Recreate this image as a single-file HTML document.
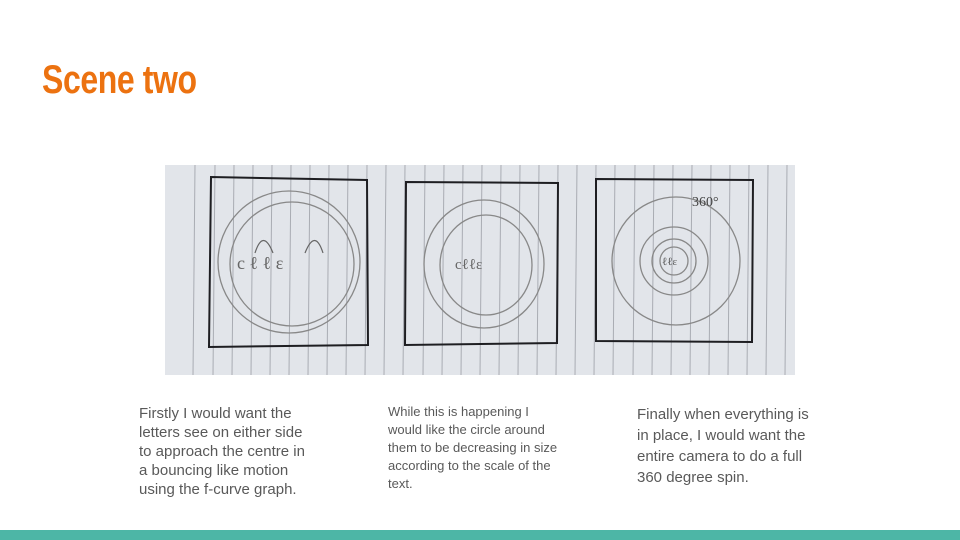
<!DOCTYPE html>
<html><head><style>
body{margin:0;width:960px;height:540px;background:#fff;position:relative;overflow:hidden;font-family:"Liberation Sans",sans-serif}
h1{position:absolute;left:42px;top:58px;margin:0;font-family:"Liberation Sans",sans-serif;font-weight:bold;font-size:40px;color:#ec7210;letter-spacing:-0.5px;transform:scaleX(0.8);transform-origin:0 0;white-space:nowrap}
.t{position:absolute;color:#595959;white-space:nowrap}
.bar{position:absolute;left:0;top:530px;width:960px;height:10px;background:#4db6a6}
</style></head><body>
<h1>Scene two</h1>
<svg style="position:absolute;left:165px;top:165px" width="630" height="210" viewBox="0 0 630 210">
<rect width="630" height="210" fill="#e2e5ea"/>
<g stroke="#a9acb3" stroke-width="1">
<line x1="30" y1="0" x2="28" y2="210"/><line x1="50" y1="0" x2="48" y2="210"/><line x1="69" y1="0" x2="67" y2="210"/><line x1="88" y1="0" x2="86" y2="210"/><line x1="107" y1="0" x2="105" y2="210"/><line x1="126" y1="0" x2="124" y2="210"/><line x1="145" y1="0" x2="143" y2="210"/><line x1="164" y1="0" x2="162" y2="210"/><line x1="183" y1="0" x2="181" y2="210"/><line x1="202" y1="0" x2="200" y2="210"/><line x1="221" y1="0" x2="219" y2="210"/><line x1="240" y1="0" x2="238" y2="210"/><line x1="260" y1="0" x2="258" y2="210"/><line x1="279" y1="0" x2="277" y2="210"/><line x1="298" y1="0" x2="296" y2="210"/><line x1="317" y1="0" x2="315" y2="210"/><line x1="336" y1="0" x2="334" y2="210"/><line x1="355" y1="0" x2="353" y2="210"/><line x1="374" y1="0" x2="372" y2="210"/><line x1="393" y1="0" x2="391" y2="210"/><line x1="412" y1="0" x2="410" y2="210"/><line x1="431" y1="0" x2="429" y2="210"/><line x1="450" y1="0" x2="448" y2="210"/><line x1="470" y1="0" x2="468" y2="210"/><line x1="489" y1="0" x2="487" y2="210"/><line x1="508" y1="0" x2="506" y2="210"/><line x1="527" y1="0" x2="525" y2="210"/><line x1="546" y1="0" x2="544" y2="210"/><line x1="565" y1="0" x2="563" y2="210"/><line x1="584" y1="0" x2="582" y2="210"/><line x1="603" y1="0" x2="601" y2="210"/><line x1="622" y1="0" x2="620" y2="210"/>
</g>
<g fill="none" stroke="#1e1e22" stroke-width="2">
<path d="M46 12 L202 15 L203 180 L44 182 Z"/>
<path d="M241 17 L393 18 L392 178 L240 180 Z"/>
<path d="M431 14 L588 15 L587 177 L431 176 Z"/>
</g>
<g fill="none" stroke="#888" stroke-width="1.3">
<circle cx="124" cy="97" r="71"/><circle cx="127" cy="99" r="62"/>
<ellipse cx="319" cy="99" rx="60" ry="64"/><ellipse cx="321" cy="100" rx="46" ry="50"/>
<circle cx="511" cy="96" r="64"/><circle cx="509" cy="96" r="34"/><circle cx="509" cy="96" r="22"/><circle cx="509" cy="96" r="14"/>
</g>
<g fill="none" stroke="#666" stroke-width="1.2">
<path d="M90 88 q8-25 18 0"/><path d="M140 88 q10-25 18 0"/>
<text x="72" y="104" font-size="18" fill="#666" stroke="none" font-family="Liberation Serif,serif">c  ℓ ℓ  ɛ</text>
<text x="290" y="104" font-size="15" fill="#666" stroke="none" font-family="Liberation Serif,serif">cℓℓɛ</text>
<text x="497" y="100" font-size="11" fill="#555" stroke="none" font-family="Liberation Serif,serif">ℓℓɛ</text>
<text x="527" y="41" font-size="14" fill="#444" stroke="none" font-family="Liberation Serif,serif">360°</text>
</g>
</svg>
<div class="t" style="left:139px;top:404px;font-size:15px;line-height:19px">Firstly I would want the<br>letters see on either side<br>to approach the centre in<br>a bouncing like motion<br>using the f-curve graph.</div>
<div class="t" style="left:388px;top:403px;font-size:13px;line-height:18px">While this is happening I<br>would like the circle around<br>them to be decreasing in size<br>according to the scale of the<br>text.</div>
<div class="t" style="left:637px;top:404px;font-size:15px;line-height:21px">Finally when everything is<br>in place, I would want the<br>entire camera to do a full<br>360 degree spin.</div>
<div class="bar"></div>
</body></html>
